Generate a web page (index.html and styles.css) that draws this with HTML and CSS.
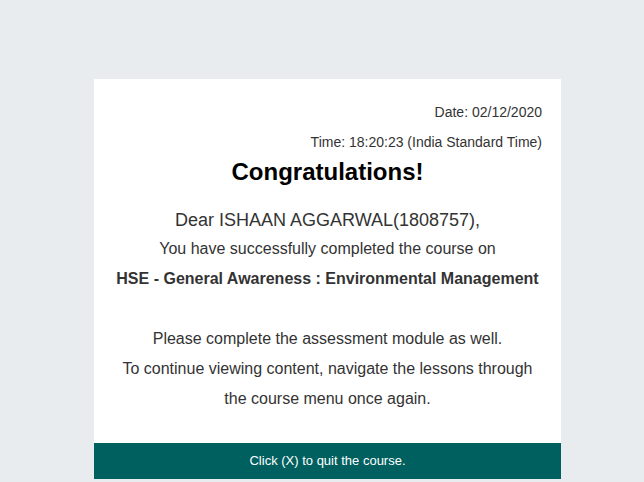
FILE: index.html
```html
<!DOCTYPE html>
<html>
<head>
<meta charset="utf-8">
<link rel="stylesheet" href="styles.css">
</head>
<body>
<div class="page">
  <div class="card">
    <div class="content">
      <p class="meta">Date: 02/12/2020</p>
      <p class="meta">Time: 18:20:23 (India Standard Time)</p>
      <h1 class="title">Congratulations!</h1>
      <p class="dear">Dear ISHAAN AGGARWAL(1808757),</p>
      <p class="line">You have successfully completed the course on</p>
      <p class="line course">HSE - General Awareness : Environmental Management</p>
      <p class="line blank">&nbsp;</p>
      <p class="line">Please complete the assessment module as well.</p>
      <p class="line">To continue viewing content, navigate the lessons through</p>
      <p class="line">the course menu once again.</p>
    </div>
    <div class="footer">Click (X) to quit the course.</div>
  </div>
</div>
</body>
</html>
```

FILE: styles.css
```css
html, body {
  margin: 0;
  padding: 0;
  background: #e8ecef;
  height: 100%;
}
body {
  font-family: "Liberation Sans", Arial, sans-serif;
  color: #333333;
}
.page {
  padding: 79px 0 0 94px;
}
.card {
  width: 467px;
  background: #ffffff;
}
.content {
  padding: 18px 19px 29px 19px;
  text-align: center;
}
.content p, .content h1 {
  margin: 0;
}
.meta {
  text-align: right;
  font-size: 14px;
  line-height: 30px;
}
.title {
  font-size: 24px;
  line-height: 30px;
  font-weight: bold;
  color: #000000;
  margin-bottom: 19px !important;
}
.dear {
  font-size: 18px;
  line-height: 28px;
}
.line {
  font-size: 16px;
  line-height: 30px;
}
.course {
  font-weight: bold;
}
.footer {
  background: #006060;
  color: #ffffff;
  font-size: 13px;
  height: 36px;
  line-height: 36px;
  text-align: center;
}
```
